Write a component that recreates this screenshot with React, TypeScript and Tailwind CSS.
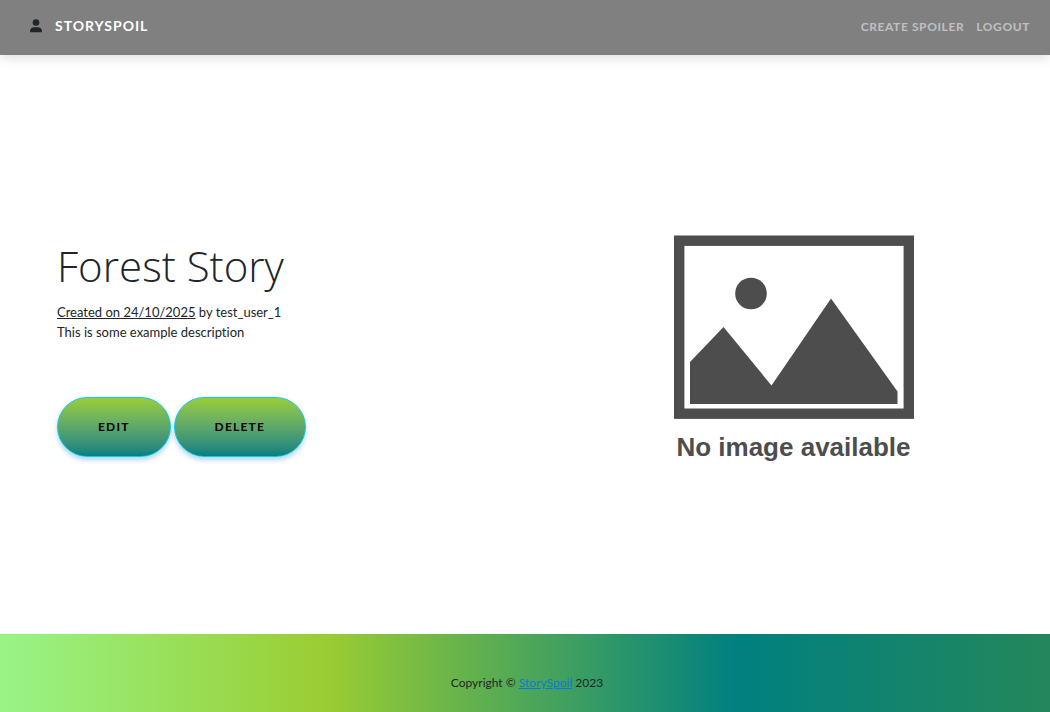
function UserIcon() {
  return (
    <svg viewBox="0 0 12 14" className="h-[14px] w-3" fill="#212529" aria-hidden="true">
      <circle cx="6" cy="3.5" r="3.3" />
      <path d="M0 12.2C0 9.6 2 8.2 4 8.2h4c2 0 4 1.4 4 4 0 .7-.4 1-1 1H1c-.6 0-1-.3-1-1z" />
    </svg>
  );
}

function NoImage() {
  return (
    <svg viewBox="0 0 240 232" className="w-60" role="img" aria-label="No image available">
      <rect x="5.2" y="5.7" width="229.6" height="173" fill="none" stroke="#4d4d4d" strokeWidth="10.4" />
      <circle cx="77" cy="58.5" r="15.8" fill="#4d4d4d" />
      <path d="M16 127 49.5 92 97.5 150.5 157 63.5 223.5 156.500V169H16z" fill="#4d4d4d" />
      <text
        x="119.500"
        y="221"
        textAnchor="middle"
        fill="#4d4d4d"
        className="font-['Liberation_Sans',sans-serif] text-[26px] font-bold"
      >
        No image available
      </text>
    </svg>
  );
}

const actionClass =
  "h-[60px] cursor-pointer rounded-full border border-[#0dcaf0] bg-linear-to-b from-[#9acd32] to-[#008080] px-10 text-xs font-bold tracking-widest text-black uppercase shadow-[0_3px_5px_rgba(0,120,180,0.3)]";

export default function App() {
  return (
    <div className="flex min-h-screen flex-col bg-white font-[Lato,sans-serif] text-[#212529] [font-variant-ligatures:none]">
      <nav className="flex h-[55px] items-center justify-between bg-[#808080] pr-5 pl-[30px] shadow-[0_2px_12px_rgba(0,0,0,0.15)]">
        <div className="flex items-center gap-[13px] pb-1">
          <UserIcon />
          <a href="#home" className="text-sm font-bold tracking-[1px] text-white uppercase">
            StorySpoil
          </a>
        </div>
        <div className="flex gap-3 pb-0.5 text-xs font-bold tracking-wider text-[#c0c0c0] uppercase">
          <a href="#create">Create Spoiler</a>
          <a href="#logout">Logout</a>
        </div>
      </nav>

      <main className="grid flex-1 grid-cols-2 items-center pr-2.5 pl-[57px]">
        <section className="pt-1.5">
          <h1 className="font-['Open_Sans',sans-serif] text-[42px] leading-[56px] font-light">Forest Story</h1>
          <p className="mt-2 text-[13px] leading-5">
            <span className="underline">Created on 24/10/2025</span> by test_user_1
          </p>
          <p className="text-[13px] leading-5">This is some example description</p>
          <div className="mt-[55px] flex gap-[3px]">
            <button type="button" className={actionClass}>
              Edit
            </button>
            <button type="button" className={actionClass}>
              Delete
            </button>
          </div>
        </section>
        <section className="flex justify-center pt-3">
          <NoImage />
        </section>
      </main>

      <footer className="flex h-[78px] items-end justify-center bg-[linear-gradient(90deg,#98f486_0%,#9acd32_31%,#008080_70%,#24875b_100%)] pb-5 pl-1 text-xs leading-[18px]">
        <p>
          Copyright ©{" "}
          <a href="#home" className="text-[#0d78d8] underline">
            StorySpoil
          </a>{" "}
          2023
        </p>
      </footer>
    </div>
  );
}
